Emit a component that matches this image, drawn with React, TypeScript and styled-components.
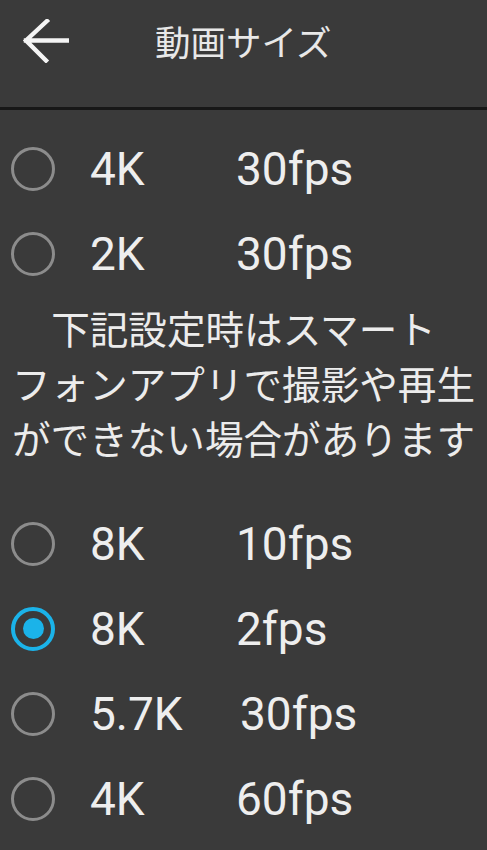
import React from "react";
import styled, { createGlobalStyle } from "styled-components";

const Global = createGlobalStyle`
  html, body { margin: 0; padding: 0; background: #3a3a3a; }
  body { font-family: Roboto, "Noto Sans CJK JP", sans-serif; }
`;

const Page = styled.div`
  width: 487px;
  height: 850px;
  background: #3a3a3a;
  overflow: hidden;
  display: flex;
  flex-direction: column;
`;

const Header = styled.header`
  box-sizing: border-box;
  height: 110px;
  border-bottom: 3px solid #171717;
  display: flex;
  align-items: flex-start;
  padding: 19px 0 0 22px;
`;

const BackButton = styled.button`
  width: 47px;
  height: 44px;
  padding: 0;
  border: none;
  background: transparent;
  display: flex;
  align-items: center;
  justify-content: center;
`;

const Title = styled.h1`
  margin: 0 0 0 86px;
  font-family: "Noto Sans CJK JP", sans-serif;
  font-weight: 400;
  font-size: 35.5px;
  line-height: 44px;
  color: #e8e8e8;
`;

const List = styled.div`
  display: flex;
  flex-direction: column;
  padding-top: 16px;
`;

const Row = styled.div`
  height: 85px;
  display: flex;
  align-items: center;
  padding-left: 11px;
`;

const Radio = styled.span<{ $checked?: boolean }>`
  box-sizing: border-box;
  width: 44px;
  height: 44px;
  border-radius: 50%;
  border: ${(p) => (p.$checked ? "4px solid #1bb3e9" : "3px solid #8c8c8c")};
  display: flex;
  align-items: center;
  justify-content: center;
  flex-shrink: 0;
  &::after {
    content: "";
    display: ${(p) => (p.$checked ? "block" : "none")};
    width: 21px;
    height: 21px;
    border-radius: 50%;
    background: #1bb3e9;
  }
`;

const Res = styled.span`
  margin-left: 35px;
  min-width: 146px;
  font-family: Roboto, sans-serif;
  font-size: 46px;
  color: #eeeeee;
  line-height: 1;
`;

const Fps = styled.span<{ $shift?: number }>`
  margin-left: ${(p) => p.$shift ?? 0}px;
  font-family: Roboto, sans-serif;
  font-size: 46px;
  color: #eeeeee;
  line-height: 1;
`;

const Note = styled.p`
  margin: 4px 0 36px;
  text-align: center;
  font-family: "Noto Sans CJK JP", sans-serif;
  font-size: 38.6px;
  line-height: 55px;
  color: #ececec;
`;

const Arrow = () => (
  <svg width="47" height="44" viewBox="0 0 47 44" fill="none">
    <path
      d="M46 21.5H4M25 2L4 21.5l20 20"
      stroke="#f4f4f4"
      strokeWidth="4.4"
      strokeLinecap="square"
      strokeLinejoin="miter"
    />
  </svg>
);

type Opt = { res: string; fps: string; checked?: boolean; shift?: number };

const top: Opt[] = [
  { res: "4K", fps: "30fps" },
  { res: "2K", fps: "30fps" },
];

const bottom: Opt[] = [
  { res: "8K", fps: "10fps" },
  { res: "8K", fps: "2fps", checked: true },
  { res: "5.7K", fps: "30fps", shift: 4 },
  { res: "4K", fps: "60fps" },
];

const Option = ({ o }: { o: Opt }) => (
  <Row>
    <Radio $checked={o.checked} />
    <Res>{o.res}</Res>
    <Fps $shift={o.shift}>{o.fps}</Fps>
  </Row>
);

export default function App() {
  return (
    <Page>
      <Global />
      <Header>
        <BackButton aria-label="back">
          <Arrow />
        </BackButton>
        <Title>動画サイズ</Title>
      </Header>
      <List>
        {top.map((o, i) => (
          <Option key={i} o={o} />
        ))}
        <Note>
          下記設定時はスマート
          <br />
          フォンアプリで撮影や再生
          <br />
          ができない場合があります
        </Note>
        {bottom.map((o, i) => (
          <Option key={i} o={o} />
        ))}
      </List>
    </Page>
  );
}
